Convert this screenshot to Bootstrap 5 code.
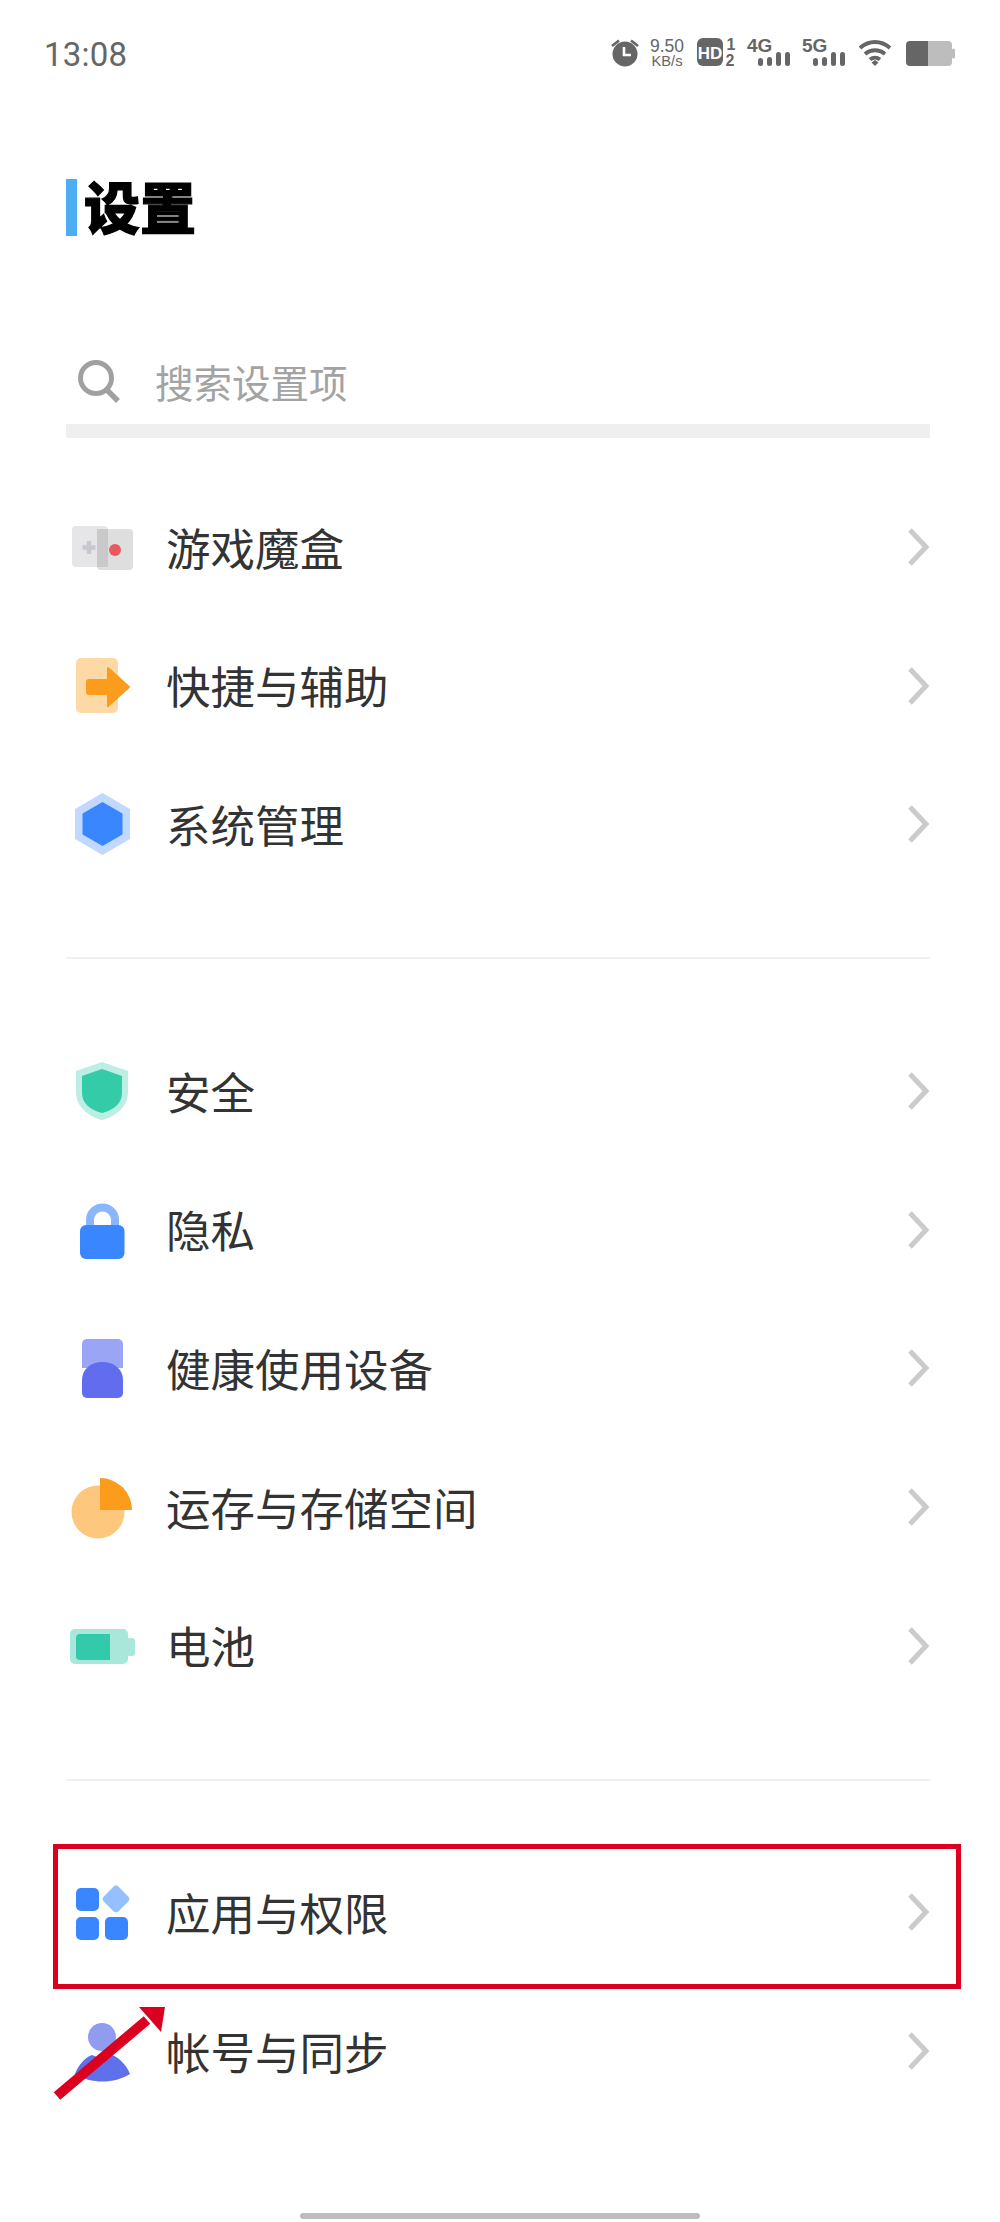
<!DOCTYPE html>
<html lang="zh-CN">
<head>
  <meta charset="UTF-8" />
  <meta name="viewport" content="width=device-width, initial-scale=1.0"/>
  <title>设置</title>
  <link href="https://cdn.jsdelivr.net/npm/bootstrap@5.3.3/dist/css/bootstrap.min.css" rel="stylesheet"/>
  <style>
    body {
      background-color: #fff;
      color: #333;
      font-family: "Noto Sans CJK SC", "Liberation Sans", sans-serif;
    }

    .phone-screen {
      position: relative;
      width: 1000px;
      height: 2222px;
      overflow: hidden;
    }

    .status-bar {
      height: 108px;
      padding: 0 45px 0 44px;
      color: #666;
    }

    .status-time {
      font-family: Roboto, sans-serif;
      font-size: 33px;
      line-height: 1;
      letter-spacing: 0.2px;
    }

    .status-icons svg {
      display: block;
      overflow: visible;
    }

    .status-icons text {
      font-family: "Liberation Sans", sans-serif;
      fill: #666;
    }

    .si-speed { margin-left: 4px; }
    .si-hd { margin-left: 9px; }
    .si-4g { margin-left: 8px; }
    .si-5g { margin-left: 9px; }
    .si-wifi { margin-left: 10px; }
    .si-battery { margin-left: 13px; }

    .page-title {
      height: 58px;
      margin: 70px 0 0 66px;
      color: #000;
      font-size: 56px;
      font-weight: 900;
      line-height: 58px;
      -webkit-text-stroke: 1.2px #000;
    }

    .title-mark {
      width: 11px;
      height: 57px;
      margin-right: 7px;
      background-color: #4dadf2;
    }

    .title-text {
      margin-top: -5px;
    }

    .search-box {
      height: 66px;
      margin: 112.5px 70px 0 78px;
      color: #a3a3a3;
      font-size: 38.5px;
    }

    .search-box svg {
      margin-right: 35px;
    }

    .search-band {
      height: 14px;
      margin: 9.5px 70px 0 66px;
      background-color: #efefef;
    }

    .settings-group {
      margin: 0 70px 0 66px;
    }

    .group-first {
      padding-top: 39.5px;
    }

    .setting-row {
      height: 138.7px;
      font-size: 44.5px;
      line-height: 1;
    }

    .row-icon {
      width: 100px;
      flex-shrink: 0;
    }

    .row-icon svg,
    .row-chevron {
      display: block;
    }

    .group-line {
      height: 2px;
      margin: 63.5px 70px 62.5px 66px;
      background-color: #f0f0f0;
    }

    .callout-box {
      position: absolute;
      left: 53px;
      top: 1844px;
      width: 908px;
      height: 145px;
      border: 5px solid #dc0020;
    }

    .callout-arrow {
      position: absolute;
      left: 50px;
      top: 2000px;
    }

    .home-bar {
      position: absolute;
      left: 300px;
      top: 2213px;
      width: 400px;
      height: 6px;
      border-radius: 3px;
      background-color: #bdbdbd;
    }
  </style>
</head>
<body>

  <div class="phone-screen">

    <div class="status-bar d-flex align-items-center justify-content-between">
      <span class="status-time">13:08</span>
      <div class="status-icons d-flex align-items-center">
        <!-- alarm -->
        <svg width="34" height="34" viewBox="0 0 34 34">
          <circle cx="17" cy="17" r="12.5" fill="#666"/>
          <path d="M16 10v8h7" fill="none" stroke="#fff" stroke-width="2.6"/>
          <path d="M4 9l7-5.500M30 9l-7-5.500" stroke="#666" stroke-width="2.6"/>
        </svg>
        <!-- speed -->
        <svg class="si-speed" width="42" height="34" viewBox="0 0 42 34">
          <text x="21" y="15" font-size="17.5" text-anchor="middle">9.50</text>
          <text x="21" y="29" font-size="14.7" text-anchor="middle">KB/s</text>
        </svg>
        <!-- HD -->
        <svg class="si-hd" width="42" height="34" viewBox="0 0 42 34">
          <rect x="0" y="1" width="26" height="28" rx="6" fill="#666"/>
          <text x="13" y="21.500" font-size="17" font-weight="700" text-anchor="middle" style="fill:#fff">HD</text>
          <text x="34" y="13" font-size="16" font-weight="700" text-anchor="middle">1</text>
          <text x="33" y="28.500" font-size="16" font-weight="700" text-anchor="middle">2</text>
        </svg>
        <!-- 4G -->
        <svg class="si-4g" width="46" height="34" viewBox="0 0 46 34">
          <text x="0" y="15" font-size="19" font-weight="700">4G</text>
          <rect x="11" y="21" width="5" height="8" rx="2.500" fill="#666"/>
          <rect x="20" y="20" width="5" height="9" rx="2.500" fill="#666"/>
          <rect x="29" y="15" width="5" height="14" rx="2.500" fill="#666"/>
          <rect x="38" y="15" width="5" height="14" rx="2.500" fill="#666"/>
        </svg>
        <!-- 5G -->
        <svg class="si-5g" width="46" height="34" viewBox="0 0 46 34">
          <text x="0" y="15" font-size="19" font-weight="700">5G</text>
          <rect x="11" y="21" width="5" height="8" rx="2.500" fill="#666"/>
          <rect x="20" y="20" width="5" height="9" rx="2.500" fill="#666"/>
          <rect x="29" y="15" width="5" height="14" rx="2.500" fill="#666"/>
          <rect x="38" y="15" width="5" height="14" rx="2.500" fill="#666"/>
        </svg>
        <!-- wifi -->
        <svg class="si-wifi" width="34" height="34" viewBox="0 0 34 34">
          <path d="M2 11c9-8 21-8 30 0M7 17c6-5 14-5 20 0M12 22.500c3-2.500 7-2.500 10 0" fill="none" stroke="#666" stroke-width="3.800"/>
          <path d="M13.500 25.500l3.500-2.500 3.500 2.500-3.500 3.500z" fill="#666"/>
        </svg>
        <!-- battery -->
        <svg class="si-battery" width="50" height="34" viewBox="0 0 50 34">
          <path d="M23 4h20a4 4 0 0 1 4 4v17a4 4 0 0 1-4 4h-20z" fill="#bdbdbd"/>
          <path d="M23 4h-18a4 4 0 0 0-4 4v17a4 4 0 0 0 4 4h18z" fill="#666"/>
          <rect x="47" y="11.500" width="3" height="10" rx="1.500" fill="#bdbdbd"/>
        </svg>
      </div>
    </div>

    <h1 class="page-title d-flex align-items-center">
      <span class="title-mark"></span><span class="title-text">设置</span>
    </h1>

    <div class="search-box d-flex align-items-center">
      <svg width="42" height="44" viewBox="0 0 42 44">
        <circle cx="18" cy="18" r="15.500" fill="none" stroke="#a0a0a0" stroke-width="5"/>
        <path d="M29 30l11 11" stroke="#a0a0a0" stroke-width="5.500"/>
      </svg>
      <span>搜索设置项</span>
    </div>
    <div class="search-band"></div>

    <div class="settings-group group-first">
      <div class="setting-row d-flex align-items-center">
        <div class="row-icon">
          <svg width="76" height="76" viewBox="0 0 76 76">
            <rect x="6" y="17" width="36" height="41" rx="4" fill="#e6e6e8"/>
            <rect x="31" y="20" width="36" height="41" rx="4" fill="#dedede"/>
            <rect x="31" y="20" width="11" height="38" fill="#c9c9c9"/>
            <path d="M23 32v13M16.500 38.500h13" stroke="#c8c8d0" stroke-width="4.500"/>
            <circle cx="49" cy="41" r="6" fill="#e85a62"/>
          </svg>
        </div>
        <span class="flex-grow-1">游戏魔盒</span>
        <svg class="row-chevron" width="23" height="38" viewBox="0 0 23 38"><path d="M3 2l16 17-16 17" fill="none" stroke="#cbcbcb" stroke-width="5"/></svg>
      </div>

      <div class="setting-row d-flex align-items-center">
        <div class="row-icon">
          <svg width="76" height="76" viewBox="0 0 76 76">
            <rect x="10" y="10" width="42" height="55" rx="5" fill="#fdd9a6"/>
            <path d="M23 32h19v-12l21 19-21 19v-12h-19a2 2 0 0 1-2-2v-10a2 2 0 0 1 2-2z" fill="#fb9c1c" stroke="#fb9c1c" stroke-width="2" stroke-linejoin="round"/>
          </svg>
        </div>
        <span class="flex-grow-1">快捷与辅助</span>
        <svg class="row-chevron" width="23" height="38" viewBox="0 0 23 38"><path d="M3 2l16 17-16 17" fill="none" stroke="#cbcbcb" stroke-width="5"/></svg>
      </div>

      <div class="setting-row d-flex align-items-center">
        <div class="row-icon">
          <svg width="76" height="76" viewBox="0 0 76 76">
            <path d="M36.500 8l26.500 15.500v29l-26.500 15.500-26.500-15.500v-29z" fill="#c2d9ff" stroke="#c2d9ff" stroke-width="2" stroke-linejoin="round"/>
            <path d="M36.500 17l19 11v20l-19 11-19-11v-20z" fill="#3a86ff" stroke="#3a86ff" stroke-width="2" stroke-linejoin="round"/>
          </svg>
        </div>
        <span class="flex-grow-1">系统管理</span>
        <svg class="row-chevron" width="23" height="38" viewBox="0 0 23 38"><path d="M3 2l16 17-16 17" fill="none" stroke="#cbcbcb" stroke-width="5"/></svg>
      </div>
    </div>

    <div class="group-line"></div>

    <div class="settings-group">
      <div class="setting-row d-flex align-items-center">
        <div class="row-icon">
          <svg width="76" height="76" viewBox="0 0 76 76">
            <path d="M36 9l26 9v21c0 14-11 24-26 28-15-4-26-14-26-28v-21z" fill="#bdeee3"/>
            <path d="M36 16l20 7v17c0 10-8 17-20 20-12-3-20-10-20-20v-17z" fill="#34cba9"/>
          </svg>
        </div>
        <span class="flex-grow-1">安全</span>
        <svg class="row-chevron" width="23" height="38" viewBox="0 0 23 38"><path d="M3 2l16 17-16 17" fill="none" stroke="#cbcbcb" stroke-width="5"/></svg>
      </div>

      <div class="setting-row d-flex align-items-center">
        <div class="row-icon">
          <svg width="76" height="76" viewBox="0 0 76 76">
            <path d="M24 36v-8a12.500 12.500 0 0 1 25 0v8" fill="none" stroke="#8ab6ff" stroke-width="8"/>
            <rect x="14" y="33" width="44.500" height="34" rx="6" fill="#3a86ff"/>
          </svg>
        </div>
        <span class="flex-grow-1">隐私</span>
        <svg class="row-chevron" width="23" height="38" viewBox="0 0 23 38"><path d="M3 2l16 17-16 17" fill="none" stroke="#cbcbcb" stroke-width="5"/></svg>
      </div>

      <div class="setting-row d-flex align-items-center">
        <div class="row-icon">
          <svg width="76" height="76" viewBox="0 0 76 76">
            <path d="M22 9h30a5 5 0 0 1 5 5v24h-41v-24a5 5 0 0 1 6-5z" fill="#9aa5f6"/>
            <path d="M16 50c0-11 9-18 20.500-18s20.500 7 20.500 18v13a5 5 0 0 1-5 5h-31a5 5 0 0 1-5-5z" fill="#616dee"/>
          </svg>
        </div>
        <span class="flex-grow-1">健康使用设备</span>
        <svg class="row-chevron" width="23" height="38" viewBox="0 0 23 38"><path d="M3 2l16 17-16 17" fill="none" stroke="#cbcbcb" stroke-width="5"/></svg>
      </div>

      <div class="setting-row d-flex align-items-center">
        <div class="row-icon">
          <svg width="76" height="76" viewBox="0 0 76 76">
            <circle cx="32" cy="43" r="26.500" fill="#fdc77e"/>
            <path d="M34 41v-32a32 32 0 0 1 32 32z" fill="#fb9c1c"/>
          </svg>
        </div>
        <span class="flex-grow-1">运存与存储空间</span>
        <svg class="row-chevron" width="23" height="38" viewBox="0 0 23 38"><path d="M3 2l16 17-16 17" fill="none" stroke="#cbcbcb" stroke-width="5"/></svg>
      </div>

      <div class="setting-row d-flex align-items-center">
        <div class="row-icon">
          <svg width="76" height="76" viewBox="0 0 76 76">
            <rect x="4" y="21" width="58" height="35" rx="5" fill="#a9e7da"/>
            <rect x="60" y="30" width="9" height="18" rx="3" fill="#a9e7da"/>
            <path d="M14 26h30v26h-30a4 4 0 0 1-4-4v-18a4 4 0 0 1 4-4z" fill="#33c9ab"/>
          </svg>
        </div>
        <span class="flex-grow-1">电池</span>
        <svg class="row-chevron" width="23" height="38" viewBox="0 0 23 38"><path d="M3 2l16 17-16 17" fill="none" stroke="#cbcbcb" stroke-width="5"/></svg>
      </div>
    </div>

    <div class="group-line"></div>

    <div class="settings-group">
      <div class="setting-row d-flex align-items-center">
        <div class="row-icon">
          <svg width="76" height="76" viewBox="0 0 76 76">
            <rect x="10" y="14" width="23" height="23" rx="5" fill="#3a86ff"/>
            <rect x="10" y="43" width="23" height="23" rx="5" fill="#3a86ff"/>
            <rect x="39" y="43" width="23" height="23" rx="5" fill="#3a86ff"/>
            <rect x="39.500" y="14.500" width="21" height="21" rx="4" fill="#96bfff" transform="rotate(45 50 25)"/>
          </svg>
        </div>
        <span class="flex-grow-1">应用与权限</span>
        <svg class="row-chevron" width="23" height="38" viewBox="0 0 23 38"><path d="M3 2l16 17-16 17" fill="none" stroke="#cbcbcb" stroke-width="5"/></svg>
      </div>

      <div class="setting-row d-flex align-items-center">
        <div class="row-icon">
          <svg width="76" height="76" viewBox="0 0 76 76">
            <circle cx="36" cy="24" r="14" fill="#8f9cf0"/>
            <path d="M9 61c3-8 9-16 17-19 6 3 14 3 20 0 8 3 15 11 18 19-16 10-39 10-55 0z" fill="#5f71ea"/>
          </svg>
        </div>
        <span class="flex-grow-1">帐号与同步</span>
        <svg class="row-chevron" width="23" height="38" viewBox="0 0 23 38"><path d="M3 2l16 17-16 17" fill="none" stroke="#cbcbcb" stroke-width="5"/></svg>
      </div>
    </div>

    <!-- annotation drawn over the screenshot -->
    <div class="callout-box"></div>
    <svg class="callout-arrow" width="120" height="104" viewBox="0 0 120 104">
      <path d="M7 96l90-76" stroke="#dc0020" stroke-width="10"/>
      <path d="M115 7l-4 25-22-25z" fill="#dc0020"/>
    </svg>

    <div class="home-bar"></div>
  </div>

  <script src="https://cdn.jsdelivr.net/npm/bootstrap@5.3.3/dist/js/bootstrap.bundle.min.js"></script>
</body>
</html>
